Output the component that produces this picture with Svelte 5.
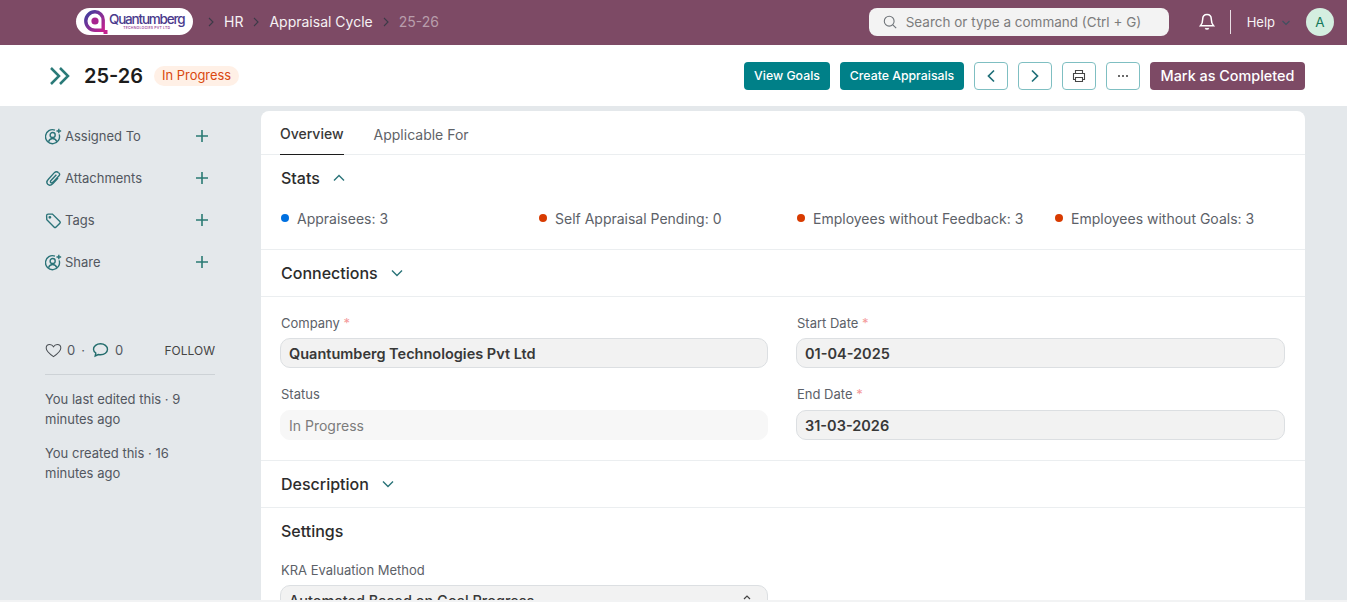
<script lang="ts">
  const sideItems = [
    { label: "Assigned To", icon: "user" },
    { label: "Attachments", icon: "clip" },
    { label: "Tags", icon: "tag" },
    { label: "Share", icon: "user" }
  ];

  const stats = [
    { label: "Appraisees: 3", color: "#0070e0" },
    { label: "Self Appraisal Pending: 0", color: "#d83b01" },
    { label: "Employees without Feedback: 3", color: "#d83b01" },
    { label: "Employees without Goals: 3", color: "#d83b01" }
  ];
</script>

<div class="page">
  <header class="navbar">
    <div class="logo">
      <svg width="24" height="24" viewBox="0 0 24 24" fill="none">
        <defs>
          <linearGradient id="q" x1="0" y1="0" x2="1" y2="1">
            <stop offset="0" stop-color="#3a3f9e" />
            <stop offset="1" stop-color="#c4228f" />
          </linearGradient>
        </defs>
        <path d="M11 1.800a9.200 9.200 0 0 0 0 18.400h8.200V10A8.200 8.200 0 0 0 11 1.800z" stroke="url(#q)" stroke-width="3.400" />
        <circle cx="11" cy="11" r="3.600" fill="#a6238f" />
        <rect x="19.500" y="20" width="4" height="4" fill="#c4228f" />
      </svg>
      <div class="logo-text">
        <span class="logo-name">Quantumberg</span>
        <span class="logo-sub">TECHNOLOGIES PVT LTD</span>
      </div>
    </div>

    <nav class="crumbs">
      <svg class="sep" width="8" height="10" viewBox="0 0 8 10" fill="none"><path d="M2 1l4 4-4 4" /></svg>
      <span>HR</span>
      <svg class="sep" width="8" height="10" viewBox="0 0 8 10" fill="none"><path d="M2 1l4 4-4 4" /></svg>
      <span>Appraisal Cycle</span>
      <svg class="sep" width="8" height="10" viewBox="0 0 8 10" fill="none"><path d="M2 1l4 4-4 4" /></svg>
      <span class="current">25-26</span>
    </nav>

    <div class="search">
      <svg width="14" height="14" viewBox="0 0 14 14" fill="none" stroke="#6f7479" stroke-width="1.100">
        <circle cx="6.200" cy="6.200" r="4.900" />
        <path d="M9.800 9.800l3.400 3.400" />
      </svg>
      <span>Search or type a command (Ctrl + G)</span>
    </div>

    <svg class="bell" width="16" height="18" viewBox="0 0 16 18" fill="none" stroke="#fff" stroke-width="1.500">
      <path d="M8 1.500c-2.800 0-4.300 2.200-4.300 4.800 0 3.400-1 5-2.200 6.400h13c-1.200-1.400-2.200-3-2.200-6.400 0-2.600-1.500-4.800-4.300-4.800z" />
      <path d="M6.300 15.300c.8 1 2.600 1 3.400 0" />
    </svg>
    <div class="divider"></div>
    <span class="help">Help</span>
    <svg class="help-caret" width="10" height="6" viewBox="0 0 10 6" fill="none"><path d="M1.500 1l3.500 3.500L8.500 1" /></svg>
    <div class="avatar">A</div>
  </header>

  <section class="titlebar">
    <svg class="chevrons" width="22" height="20" viewBox="0 0 22 20" fill="none">
      <path d="M2 2l8 8-8 8M11 2l8 8-8 8" />
    </svg>
    <h1>25-26</h1>
    <span class="pill">In Progress</span>

    <div class="actions">
      <button class="btn teal goals">View Goals</button>
      <button class="btn teal create">Create Appraisals</button>
      <button class="btn icon">
        <svg width="10" height="14" viewBox="0 0 10 14" fill="none"><path d="M8 1.500L2.500 7 8 12.500" /></svg>
      </button>
      <button class="btn icon">
        <svg width="10" height="14" viewBox="0 0 10 14" fill="none"><path d="M2 1.500L7.500 7 2 12.500" /></svg>
      </button>
      <button class="btn icon">
        <svg class="print" width="14" height="14" viewBox="0 0 14 14" fill="none">
          <path d="M3.500 4.500V1.500h7v3M3.500 10.500H1.500v-6h11v6h-2" />
          <path d="M3.500 8.500h7v4h-7z" />
        </svg>
      </button>
      <button class="btn icon">
        <svg width="12" height="4" viewBox="0 0 12 4"><circle cx="2" cy="2" r="1" fill="#383838" /><circle cx="6" cy="2" r="1" fill="#383838" /><circle cx="10" cy="2" r="1" fill="#383838" /></svg>
      </button>
      <button class="btn plum">Mark as Completed</button>
    </div>
  </section>

  <div class="body">
    <aside class="sidebar">
      <ul class="side-list">
        {#each sideItems as item}
          <li>
            <span class="side-icon">
              {#if item.icon === "user"}
                <svg width="17" height="17" viewBox="0 0 16 16" fill="none">
                  <path d="M13.300 6a6.600 6.600 0 1 1-3.900-4" />
                  <circle cx="7.200" cy="6.600" r="2.400" />
                  <path d="M3.300 12.900c.7-2 2.200-3 3.900-3s3.200 1 3.900 3" />
                  <path d="M13 .6v4.400M10.800 2.800h4.400" />
                </svg>
              {:else if item.icon === "clip"}
                <svg width="17" height="17" viewBox="0 0 16 16" fill="none">
                  <path d="M12.800 2.600c-1.300-1.300-3-1.100-4.200.1L3.400 8.400c-1.900 2-1.900 4-.8 5.100 1.200 1.100 3.100.9 4.900-.9l4.800-5" />
                  <path d="M10.700 4.400L5.800 9.600c-.9.900-.9 1.700-.4 2.200.5.500 1.300.4 2.100-.4l5.500-5.800c1.100-1.200 1.100-2.100-.2-3" />
                </svg>
              {:else}
                <svg width="17" height="17" viewBox="0 0 16 16" fill="none">
                  <path d="M1.500 3.500a1.500 1.500 0 0 1 1.500-1.500h4l7 7c.5.500.5 1 0 1.500l-3.800 3.800c-.5.500-1 .5-1.500 0l-7-7z" />
                  <circle cx="4.600" cy="5" r=".7" />
                </svg>
              {/if}
            </span>
            <span class="side-label">{item.label}</span>
            <svg class="plus" width="14" height="14" viewBox="0 0 14 14" fill="none"><path d="M7 1v12M1 7h12" /></svg>
          </li>
        {/each}
      </ul>

      <div class="social">
        <svg class="heart" width="17" height="15" viewBox="0 0 18 16" fill="none" stroke="#4a4f54" stroke-width="1.100">
          <path d="M9 14.500C4 11 1.200 8.300 1.200 5.300 1.200 3 3 1.500 5 1.500c1.700 0 3.100.9 4 2.500.9-1.600 2.300-2.500 4-2.500 2 0 3.800 1.500 3.800 3.800 0 3-2.800 5.700-7.800 9.200z" />
        </svg>
        <span class="count">0</span>
        <span class="dot">·</span>
        <svg class="bubble" width="17" height="16" viewBox="0 0 16 16" fill="none" stroke="#226c6c" stroke-width="1.400">
          <path d="M8 1.800c3.800 0 7 2.300 7 5.500s-3.200 5.500-7 5.500c-.8 0-1.500-.1-2.200-.3L2.700 14l.6-3c-1.400-1-2.300-2.300-2.300-3.700 0-3.200 3.200-5.500 7-5.500z" />
        </svg>
        <span class="count">0</span>
        <span class="follow">FOLLOW</span>
      </div>
      <p class="activity">You last edited this · 9 minutes ago</p>
      <p class="activity">You created this · 16 minutes ago</p>
    </aside>

    <main class="card">
      <div class="tabs">
        <span class="tab active">Overview</span>
        <span class="tab">Applicable For</span>
      </div>

      <section class="stats">
        <h2>Stats
          <svg class="caret" width="12" height="8" viewBox="0 0 12 8" fill="none"><path d="M1 6.500L6 1.500l5 5" /></svg>
        </h2>
        <div class="stat-row">
          {#each stats as stat}
            <div class="stat">
              <span class="bullet" style="background: {stat.color}"></span>
              <span>{stat.label}</span>
            </div>
          {/each}
        </div>
      </section>

      <section class="collapsed">
        <h2>Connections
          <svg class="caret" width="12" height="8" viewBox="0 0 12 8" fill="none"><path d="M1 1.500l5 5 5-5" /></svg>
        </h2>
      </section>

      <section class="fields">
        <div class="col">
          <div class="field">
            <span class="label">Company <em>*</em></span>
            <div class="input">Quantumberg Technologies Pvt Ltd</div>
          </div>
          <div class="field">
            <span class="label">Status</span>
            <div class="input readonly">In Progress</div>
          </div>
        </div>
        <div class="col">
          <div class="field">
            <span class="label">Start Date <em>*</em></span>
            <div class="input">01-04-2025</div>
          </div>
          <div class="field">
            <span class="label">End Date <em>*</em></span>
            <div class="input">31-03-2026</div>
          </div>
        </div>
      </section>

      <section class="collapsed">
        <h2>Description
          <svg class="caret" width="12" height="8" viewBox="0 0 12 8" fill="none"><path d="M1 1.500l5 5 5-5" /></svg>
        </h2>
      </section>

      <section class="settings">
        <h2>Settings</h2>
        <div class="col half">
          <div class="field">
            <span class="label">KRA Evaluation Method</span>
            <div class="input select">
              Automated Based on Goal Progress
              <svg width="8" height="5" viewBox="0 0 8 5" fill="none"><path d="M1 4l3-3 3 3" /></svg>
            </div>
          </div>
        </div>
      </section>
    </main>
  </div>
  <div class="strip"></div>
</div>

<style>
  :global(body) {
    margin: 0;
    overflow: hidden;
  }

  .page {
    position: relative;
    height: 602px;
    overflow: hidden;
    background: #e4e8eb;
    font-family: Inter, "Liberation Sans", sans-serif;
    color: #383838;
  }

  .strip {
    position: absolute;
    left: 0;
    right: 0;
    bottom: 0;
    height: 2px;
    background: #f2f3f4;
  }

  .navbar {
    display: flex;
    align-items: center;
    height: 45px;
    padding: 0 13px 2px 76px;
    background: #7d4a65;
    box-sizing: border-box;
  }

  .logo {
    display: flex;
    align-items: center;
    gap: 1px;
    flex-shrink: 0;
    width: 117px;
    height: 27px;
    padding-left: 8px;
    box-sizing: border-box;
    background: #fff;
    border-radius: 14px;
  }

  .logo-text {
    display: flex;
    flex-direction: column;
    align-items: center;
    line-height: 1;
  }

  .logo-name {
    font-size: 13.500px;
    font-weight: 500;
    letter-spacing: -1.200px;
    color: #4a3a8c;
  }

  .logo-sub {
    font-size: 3.500px;
    font-weight: 600;
    color: #a04a9c;
    margin-top: 1px;
    letter-spacing: 0.2px;
  }

  .crumbs {
    display: flex;
    align-items: center;
    margin-left: 14px;
    font-size: 14px;
    color: #f6f2f4;
  }

  .sep {
    margin-right: 9px;
  }

  .sep path {
    stroke: #3c3a48;
    stroke-width: 1.100;
  }

  .crumbs span {
    margin-right: 9px;
  }

  .crumbs .current {
    color: #b89dab;
  }

  .search {
    display: flex;
    align-items: center;
    gap: 9px;
    width: 300px;
    height: 28px;
    margin-left: auto;
    padding-left: 14px;
    box-sizing: border-box;
    background: #f3f3f3;
    border-radius: 8px;
    font-size: 13.500px;
    color: #7c7c7c;
  }

  .bell {
    margin-left: 30px;
    flex-shrink: 0;
  }

  .divider {
    width: 1px;
    height: 24px;
    margin-left: 15px;
    background: #e8dfe4;
  }

  .help {
    margin-left: 16px;
    font-size: 13px;
    color: #f6f2f4;
  }

  .help-caret {
    flex-shrink: 0;
    margin: 3px 0 0 6px;
  }

  .help-caret path {
    stroke: #3f5060;
    stroke-width: 1.100;
  }

  .avatar {
    display: flex;
    align-items: center;
    justify-content: center;
    flex-shrink: 0;
    width: 28px;
    height: 28px;
    margin-left: 15px;
    border-radius: 50%;
    background: #d4eee0;
    color: #14795a;
    font-size: 13.500px;
  }

  .titlebar {
    display: flex;
    align-items: center;
    height: 61px;
    padding: 0 42px 0 49px;
    background: #fff;
  }

  .chevrons path {
    stroke: #2a7a78;
    stroke-width: 2.500;
  }

  h1 {
    margin: 0 0 0 13px;
    font-size: 20px;
    line-height: 1;
    font-weight: 600;
    color: #1c1c1c;
  }

  .pill {
    margin-left: 11px;
    padding: 0 8px;
    height: 20px;
    line-height: 20px;
    border-radius: 10px;
    background: #fff0e6;
    color: #d9480f;
    font-size: 12.900px;
  }

  .actions {
    display: flex;
    align-items: center;
    gap: 10px;
    margin-left: auto;
  }

  .btn {
    display: flex;
    align-items: center;
    justify-content: center;
    height: 28px;
    padding: 0;
    box-sizing: border-box;
    border: none;
    border-radius: 4px;
    font-family: inherit;
    font-size: 12.300px;
    font-weight: 500;
    color: #fff;
  }

  .teal {
    background: #008088;
  }

  .goals {
    width: 86px;
  }

  .create {
    width: 124px;
  }

  .plum {
    background: #7d4a65;
    font-size: 14.400px;
    width: 155px;
  }

  .icon {
    width: 34px;
    background: #fff;
    border: 1px solid #7fbfc2;
  }

  .icon path {
    stroke: #1f6f78;
    stroke-width: 1.700;
  }

  .print path {
    stroke: #454545;
    stroke-width: 1.100;
  }

  .body {
    display: grid;
    grid-template-columns: 261px 1044px;
    padding-top: 5px;
  }

  .sidebar {
    padding: 4px 46px 0 45px;
  }

  .side-list {
    margin: 0;
    padding: 0;
    list-style: none;
  }

  .side-list li {
    display: flex;
    align-items: center;
    height: 42px;
    font-size: 13px;
    color: #525760;
  }

  .side-icon {
    display: flex;
    width: 20px;
  }

  .side-icon path,
  .side-icon circle {
    stroke: #2a7378;
    stroke-width: 1.300;
  }

  .plus {
    margin-left: auto;
    margin-right: 6px;
  }

  .plus path {
    stroke: #2a7a74;
    stroke-width: 1.600;
  }

  .social {
    display: flex;
    align-items: center;
    padding-bottom: 16px;
    margin-top: 59px;
    border-bottom: 1px solid #cdd2d6;
    font-size: 13px;
    color: #525760;
  }

  .count {
    margin-left: 5px;
  }

  .dot {
    margin: 0 7px 0 6px;
  }

  .bubble + .count {
    margin-left: 6px;
  }

  .follow {
    margin-left: auto;
    font-size: 12px;
    color: #444;
  }

  .activity {
    margin: 14px 0 0;
    width: 150px;
    font-size: 13px;
    line-height: 20px;
    color: #525760;
  }

  .card {
    background: #fff;
    border-radius: 8px 8px 0 0;
    font-size: 13px;
  }

  .tabs {
    display: flex;
    gap: 30px;
    height: 44px;
    padding: 0 19px;
    box-sizing: border-box;
    border-bottom: 1px solid #ebeef0;
  }

  .tab {
    height: 44px;
    box-sizing: border-box;
    padding-top: 15px;
    font-size: 14px;
    color: #5f6368;
  }

  .tab.active {
    font-weight: 500;
    color: #383838;
    border-bottom: 1px solid #1c1c1c;
    padding-top: 14px;
  }

  h2 {
    display: flex;
    align-items: center;
    margin: 0;
    font-size: 16px;
    font-weight: 500;
    color: #2c2c2c;
  }

  .caret {
    margin-left: 13px;
  }

  .caret path {
    stroke: #2a7378;
    stroke-width: 1.400;
  }

  .stats {
    height: 95px;
    padding: 13px 20px 0;
    box-sizing: border-box;
    border-bottom: 1px solid #ebeef0;
  }

  .stat-row {
    display: grid;
    grid-template-columns: repeat(4, 258px);
    margin-top: 22px;
  }

  .stat {
    display: flex;
    align-items: center;
    gap: 8px;
    font-size: 14px;
    color: #5c6168;
  }

  .bullet {
    width: 8px;
    height: 8px;
    margin-top: -2px;
    border-radius: 50%;
  }

  .collapsed {
    display: flex;
    align-items: center;
    height: 47px;
    box-sizing: border-box;
    padding: 0 20px;
    border-bottom: 1px solid #ebeef0;
  }

  .fields {
    display: grid;
    grid-template-columns: 487px 488px;
    gap: 29px;
    height: 164px;
    padding: 18px 20px 0;
    box-sizing: border-box;
    border-bottom: 1px solid #ebeef0;
  }

  .col {
    display: flex;
    flex-direction: column;
    gap: 18px;
  }

  .col.half {
    width: 487px;
    margin-top: 21px;
  }

  .field {
    display: flex;
    flex-direction: column;
    gap: 7px;
  }

  .field + .field {
    gap: 8px;
  }

  .label {
    font-size: 13px;
    line-height: 16px;
    color: #5c6168;
  }

  .label em {
    font-style: normal;
    color: #f49a9a;
  }

  .input {
    display: flex;
    align-items: center;
    justify-content: space-between;
    height: 30px;
    margin-left: -1px;
    padding: 0 8px;
    box-sizing: border-box;
    background: #f2f2f2;
    border: 1px solid #dcdfe2;
    border-radius: 10px;
    font-size: 14.500px;
    font-weight: 600;
    color: #383838;
  }

  .input.readonly {
    background: #f7f7f7;
    border-color: #f7f7f7;
    font-size: 14px;
    font-weight: 400;
    color: #7c7c7c;
  }

  .input.select {
    padding-right: 16px;
    font-weight: 500;
  }

  .select svg {
    margin-top: -5px;
  }

  .select path {
    stroke: #444;
    stroke-width: 1.200;
  }

  .settings {
    padding: 13px 20px 0;
  }
</style>
